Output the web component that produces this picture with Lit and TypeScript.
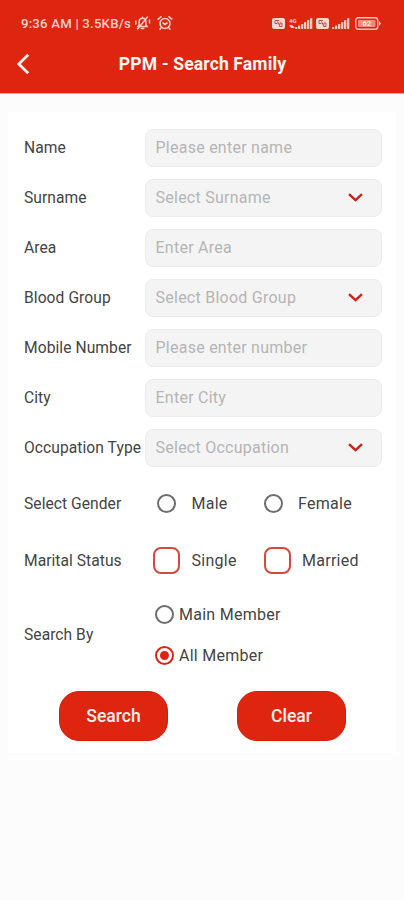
import { LitElement, html, svg, css } from "lit";
import { customElement, property } from "lit/decorators.js";

@customElement("signal-bars")
class SignalBars extends LitElement {
  static styles = css`
    :host { display: block; height: 12px; }
    svg { display: block; }
  `;
  render() {
    const bars = [2, 3.5, 5, 7, 9, 11];
    return html`<svg width="18" height="12" viewBox="0 0 18 12" fill="#f9c9bd">
      ${bars.map((h, i) => svg`<rect x=${i * 3} y=${12 - h} width="2.3" height=${h} rx="0.4" />`)}
    </svg>`;
  }
}

@customElement("status-bar")
class StatusBar extends LitElement {
  static styles = css`
    :host { display: flex; align-items: center; height: 24px; padding: 0 22px 0 21px; color: #fbd3c9; }
    .time { font-size: 13.2px; font-weight: 500; letter-spacing: 0.2px; width: 113px; white-space: nowrap; }
    svg { display: block; flex: none; }
    .alarm { margin-left: 5px; }
    .space { flex: 1; }
    .sim { width: 13px; height: 11px; border-radius: 2px; background: #fcd9d0; display: flex; }
    .net { display: flex; flex-direction: column; font-size: 6px; line-height: 7px; font-weight: 700; width: 8px; height: 12px; margin-left: 4px; margin-right: -6px; }
    .first { margin: 0 3px 0 4px; }
    .second { margin: 0 5px 0 3px; }
    .level { font: 700 8px Roboto, sans-serif; }
  `;
  sim() {
    return html`<span class="sim"><svg width="13" height="11" viewBox="0 0 13 11" fill="none" stroke="#bd5140" stroke-width="1">
      <path d="M3 2.5h4M3 2.5v3h2.5M5.5 3.5l2 4M8 5h2v3.5H7.5z" /></svg></span>`;
  }
  render() {
    return html`
      <span class="time">9:36 AM | 3.5KB/s</span>
      <svg width="18" height="16" viewBox="0 0 18 16" fill="none" stroke="#fbd3c9" stroke-width="1.5" stroke-linecap="round">
        <path d="M4 11.5h9l-1.2-2V6.5a3.3 3.3 0 0 0-6.6 0v3zM7.2 13.5h2.6M13.5 2L3.5 14M1.8 6v3M15.5 5v3M8.5 2.2V3" />
      </svg>
      <svg class="alarm" width="16" height="16" viewBox="0 0 16 16" fill="none" stroke="#fbd3c9" stroke-width="1.6" stroke-linecap="round">
        <circle cx="8" cy="8.5" r="5" /><path d="M6 8l2 1.5L10 8M1.2 4.2L4 1.8M14.8 4.2L12 1.8M4 13l-1 1.2M12 13l1 1.2" />
      </svg>
      <span class="space"></span>
      ${this.sim()}
      <span class="net"><span>4G</span><svg width="8" height="5" viewBox="0 0 8 5" fill="#fbd3c9"><path d="M0 1h3l3 3H2z" /></svg></span>
      <signal-bars class="first"></signal-bars>
      ${this.sim()}
      <signal-bars class="second"></signal-bars>
      <svg width="27" height="13" viewBox="0 0 27 13" fill="none" stroke="#f9c9bd">
        <rect x="0.7" y="0.7" width="22" height="11.6" rx="2.6" stroke-width="1.4" />
        <rect x="3" y="3" width="17.5" height="7" rx="1" fill="#ee8c7a" stroke="none" />
        <path d="M24 4l2.2 2.5L24 9z" fill="#f9c9bd" stroke="none" />
        <text class="level" x="7.2" y="9.4" fill="#ffe5dd" stroke="none">62</text>
      </svg>
    `;
  }
}

@customElement("form-field")
class FormField extends LitElement {
  @property() label = "";
  @property() hint = "";
  @property({ type: Boolean }) select = false;
  static styles = css`
    :host { display: flex; align-items: center; height: 38.5px; }
    .label { width: 120.5px; flex: none; white-space: nowrap; font-size: 15.6px; letter-spacing: 0.07px; color: #444; line-height: 19px; padding-top: 1px; }
    .box { box-sizing: border-box; flex: 1; height: 38.5px; display: flex; align-items: center; justify-content: space-between;
      padding: 0 18.5px 0 10px; border: 1px solid #ebebeb; border-radius: 8px; background: #f4f4f4; color: #b4b4b4; font-size: 16px; line-height: 19px; letter-spacing: 0.25px; }
  `;
  render() {
    return html`<span class="label">${this.label}</span>
      <div class="box"><span>${this.hint}</span>
        ${this.select ? html`<svg width="15" height="9" viewBox="0 0 15 9" fill="none" stroke="#cc2217" stroke-width="2.4">
          <path d="M1 1.2L7.5 7.2L14 1.2" /></svg>` : ""}
      </div>`;
  }
}

@customElement("app-root")
class AppRoot extends LitElement {
  static styles = css`
    :host { display: block; height: 900px; overflow: hidden; background: #fcfcfc; font-family: Roboto, sans-serif; }
    header { height: 82px; padding-top: 11px; background: #de250f; border-bottom: 1px solid #f0a79e; }
    .bar { display: grid; grid-template-columns: 42px 1fr 42px; align-items: center; height: 58px; }
    .bar svg { margin-left: 16px; display: block; }
    h1 { margin: 0; padding-left: 1px; text-align: center; color: #fff4f0; font-size: 17.5px; font-weight: 700; letter-spacing: 0.15px; white-space: nowrap; }
    .card { margin: 18px 8px 0; padding: 16.5px 14px 0 16px; height: 624.5px; background: #fff; }
    .fields { display: grid; gap: 11.5px; }
    .row { display: grid; grid-template-columns: 120px 1fr; align-items: center; color: #444; font-size: 15.6px; letter-spacing: 0.05px; }
    .gender { height: 56px; margin-top: 8.5px; }
    .marital { height: 58px; }
    .by { height: 82px; margin-top: 4px; }
    .choices { display: flex; align-items: center; }
    .choices, .stack { font-size: 16px; letter-spacing: 0.27px; }
    .stack { display: grid; grid-auto-rows: 41px; }
    .opt { display: flex; align-items: center; white-space: nowrap; }
    .choices .opt { width: 110.5px; }
    .radio { box-sizing: border-box; width: 19px; height: 19px; border: 2px solid #6d6d6d; border-radius: 50%; margin: 0 15.5px 0 13px; flex: none; display: grid; place-items: center; }
    .gender .opt + .opt .radio { margin-left: 9px; margin-right: 15.5px; }
    .stack .radio { margin: 0 5px 0 11px; }
    .radio.on { border-color: #dc2412; }
    .on::after { content: ""; width: 9px; height: 9px; border-radius: 50%; background: #dc2412; }
    .check { box-sizing: border-box; width: 27px; height: 27px; border: 2px solid #d34a3c; border-radius: 8px; margin: 0 11.5px 0 9px; flex: none; }
    .actions { display: flex; justify-content: space-between; padding: 0 36px 0 35px; margin-top: 15.5px; }
    button { width: 109px; height: 50px; border: 1px solid #d51d0c; border-radius: 20px; background: #de250f; color: #fff0eb; font: 500 17.5px Roboto, sans-serif; padding: 0; }
  `;
  radio(text: string, on = false) {
    return html`<span class="opt"><span class="radio ${on ? "on" : ""}"></span><span>${text}</span></span>`;
  }
  check(text: string) {
    return html`<span class="opt"><span class="check"></span><span>${text}</span></span>`;
  }
  render() {
    return html`
      <header>
        <status-bar></status-bar>
        <div class="bar">
          <svg width="15" height="22" viewBox="0 0 15 22" fill="none" stroke="#fff4f0" stroke-width="2.7"><path d="M12.2 1.8L2.8 11l9.4 9.2" /></svg>
          <h1>PPM - Search Family</h1>
        </div>
      </header>
      <main class="card">
        <div class="fields">
          <form-field label="Name" hint="Please enter name"></form-field>
          <form-field label="Surname" hint="Select Surname" select></form-field>
          <form-field label="Area" hint="Enter Area"></form-field>
          <form-field label="Blood Group" hint="Select Blood Group" select></form-field>
          <form-field label="Mobile Number" hint="Please enter number"></form-field>
          <form-field label="City" hint="Enter City"></form-field>
          <form-field label="Occupation Type" hint="Select Occupation" select></form-field>
        </div>
        <div class="row gender"><span>Select Gender</span><div class="choices">${this.radio("Male")}${this.radio("Female")}</div></div>
        <div class="row marital"><span>Marital Status</span><div class="choices">${this.check("Single")}${this.check("Married")}</div></div>
        <div class="row by"><span>Search By</span><div class="stack">${this.radio("Main Member")}${this.radio("All Member", true)}</div></div>
        <div class="actions"><button>Search</button><button>Clear</button></div>
      </main>
    `;
  }
}
